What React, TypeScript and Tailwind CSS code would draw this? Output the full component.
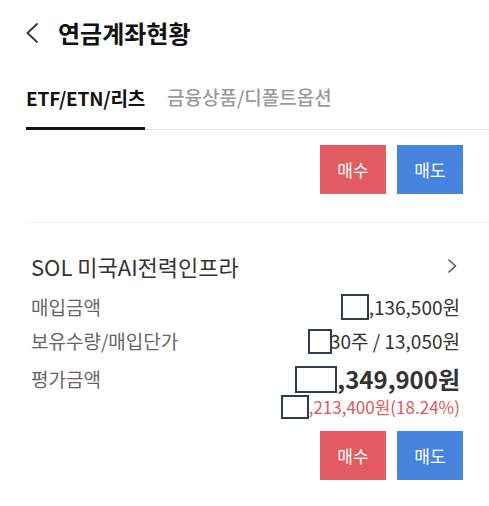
const rows = [
  { label: '매입금액', value: ',136,500원', box: 'w-[28px] h-[26px]' },
  { label: '보유수량/매입단가', value: '30주 / 13,050원', box: 'w-[24px] h-[25px] -mr-[2px]' },
];

function Redact({ className }: { className: string }) {
  return <span className={`inline-block border-2 border-[#2d3e50] bg-white ${className}`} />;
}

function TradeButtons() {
  return (
    <div className="flex justify-end gap-[11px]">
      <button className="w-[66px] h-[49px] bg-[#e15b60] text-white text-[17px]">매수</button>
      <button className="w-[66px] h-[49px] bg-[#4784dd] text-white text-[17px]">매도</button>
    </div>
  );
}

export default function App() {
  return (
    <div
      className="w-[489px] h-[506px] bg-white text-[#222] overflow-hidden"
      style={{ fontFamily: '"Noto Sans CJK KR", "Noto Sans", sans-serif' }}
    >
      {/* Header */}
      <div className="h-[66px] flex items-center pl-[26px]">
        <svg width="12" height="20" viewBox="0 0 12 20" fill="none" className="text-[#333]">
          <path d="M11 1 L1.5 10 L11 19" stroke="currentColor" strokeWidth="1.8" strokeLinecap="round" strokeLinejoin="round" />
        </svg>
        <h1 className="ml-[20px] text-[24px] font-bold text-[#111]">연금계좌현황</h1>
      </div>

      {/* Tabs */}
      <div className="ml-[26px] h-[64px] flex items-end border-b border-[#e6e6e6]">
        <div className="pb-[15px] border-b-[3px] border-[#111] -mb-[1px] text-[19px] font-bold text-[#111] tracking-[-0.2px]">
          ETF/ETN/리츠
        </div>
        <div className="ml-[22px] pb-[18px] text-[19px] font-medium text-[#9a9a9a]">
          금융상품/디폴트옵션
        </div>
      </div>

      {/* Top trade buttons */}
      <div className="pt-[15px] pb-[28px] pr-[26px] ml-[26px] border-b border-[#eee]">
        <TradeButtons />
      </div>

      {/* Holding card */}
      <div className="pl-[31px] pr-[29px] pt-[28px]">
        <div className="flex items-center justify-between h-[30px]">
          <span className="text-[22px] text-[#333]">SOL 미국AI전력인프라</span>
          <svg width="9" height="14" viewBox="0 0 9 14" fill="none" className="text-[#555] mr-[3px]">
            <path d="M1 1 L7.5 7 L1 13" stroke="currentColor" strokeWidth="1.6" strokeLinecap="round" strokeLinejoin="round" />
          </svg>
        </div>

        <div className="mt-[12px] flex flex-col gap-[6px]">
          {rows.map((r) => (
            <div key={r.label} className="flex items-center justify-between h-[28px]">
              <span className="text-[19px] text-[#666]">{r.label}</span>
              <span className="flex items-center text-[19px] text-[#333]">
                <Redact className={r.box} />
                {r.value}
              </span>
            </div>
          ))}
        </div>

        <div className="mt-[8px] flex items-center justify-between h-[32px]">
          <span className="text-[19px] text-[#666]">평가금액</span>
          <span className="flex items-center text-[24px] font-bold text-[#333]">
            <Redact className="w-[42px] h-[27px]" />
            ,349,900원
          </span>
        </div>

        <div className="flex items-center justify-end h-[24px] text-[17px] text-[#e0585d]">
          <Redact className="w-[28px] h-[24px]" />
          ,213,400원(18.24%)
        </div>

        <div className="mt-[12px] -mr-[3px]">
          <TradeButtons />
        </div>
      </div>
    </div>
  );
}
